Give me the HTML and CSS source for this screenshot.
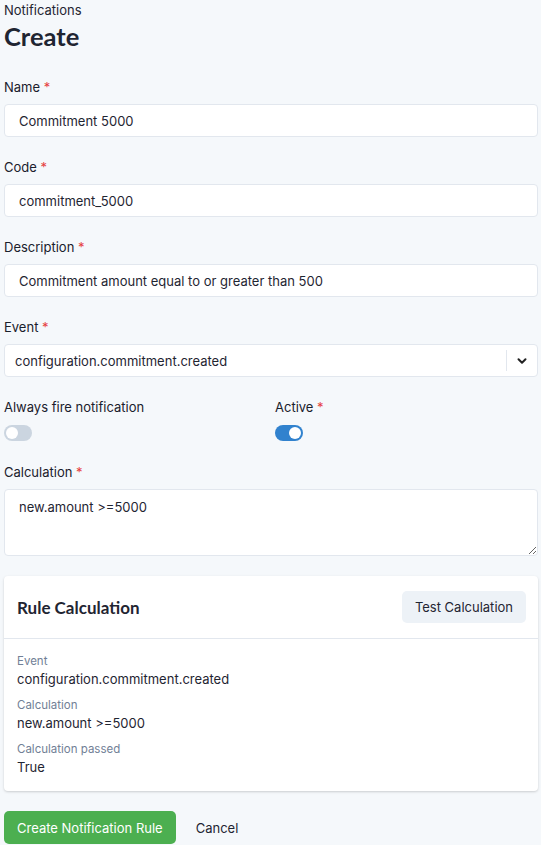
FILE: index.html
```html
<!DOCTYPE html>
<html lang="en">
<head>
    <meta charset="UTF-8">
    <meta name="viewport" content="width=device-width, initial-scale=1.0">
    <title>Create Notification</title>
    <link rel="stylesheet" href="styles.css">
</head>
<body>

<div class="page">
    <div class="breadcrumb">Notifications</div>
    <h1 class="page-title">Create</h1>

    <form class="rule-form">
        <div class="field">
            <label>Name <span class="req">*</span></label>
            <input type="text" class="text-input" value="Commitment 5000">
        </div>

        <div class="field">
            <label>Code <span class="req">*</span></label>
            <input type="text" class="text-input" value="commitment_5000">
        </div>

        <div class="field">
            <label>Description <span class="req">*</span></label>
            <input type="text" class="text-input" value="Commitment amount equal to or greater than 500">
        </div>

        <div class="field">
            <label>Event <span class="req">*</span></label>
            <div class="select">
                <span class="select-value">configuration.commitment.created</span>
                <span class="select-sep"></span>
                <span class="select-arrow">
                    <svg width="12" height="12" viewBox="0 0 12 12"><path d="M2.5 4.2 L6 7.7 L9.5 4.2" fill="none" stroke="#222" stroke-width="2" stroke-linecap="round" stroke-linejoin="round"/></svg>
                </span>
            </div>
        </div>

        <div class="field-row">
            <div class="field">
                <label>Always fire notification</label>
                <span class="toggle"><span class="knob"></span></span>
            </div>
            <div class="field">
                <label>Active <span class="req">*</span></label>
                <span class="toggle on"><span class="knob"></span></span>
            </div>
        </div>

        <div class="field">
            <label>Calculation <span class="req">*</span></label>
            <textarea class="text-area">new.amount &gt;=5000</textarea>
        </div>
    </form>

    <div class="card">
        <div class="card-header">
            <h2>Rule Calculation</h2>
            <button class="btn-light">Test Calculation</button>
        </div>
        <div class="card-body">
            <div class="result">
                <div class="result-label">Event</div>
                <div class="result-value">configuration.commitment.created</div>
            </div>
            <div class="result">
                <div class="result-label">Calculation</div>
                <div class="result-value">new.amount &gt;=5000</div>
            </div>
            <div class="result">
                <div class="result-label">Calculation passed</div>
                <div class="result-value">True</div>
            </div>
        </div>
    </div>

    <div class="actions">
        <button class="btn-primary">Create Notification Rule</button>
        <button class="btn-link">Cancel</button>
    </div>
</div>

</body>
</html>
```

FILE: styles.css
```css
body {
    margin: 0;
    background-color: #f5f8fb;
    font-family: Inter, "Noto Sans", sans-serif;
    color: #1f2532;
}
.page {
    padding: 3px 3px 0 4px;
}
.breadcrumb {
    font-size: 13px;
    line-height: 15px;
}
.page-title {
    font-family: Lato, sans-serif;
    font-size: 25.5px;
    font-weight: 700;
    line-height: 30px;
    margin: 3px 0 0;
}
.rule-form {
    margin-top: 27px;
}
.field {
    margin-bottom: 21px;
}
.field label {
    display: block;
    font-size: 13px;
    font-weight: 400;
    line-height: 18px;
    margin-bottom: 8px;
    color: #1a202c;
}
.req {
    color: #e53e3e;
}
.text-input {
    display: block;
    box-sizing: border-box;
    width: 100%;
    height: 33px;
    padding: 0 14px;
    border: 1px solid #e2e7ee;
    border-radius: 4px;
    background: #fff;
    font-family: inherit;
    font-size: 13px;
    color: #1f2532;
}
.select {
    display: flex;
    align-items: center;
    box-sizing: border-box;
    height: 33px;
    padding-left: 10px;
    border: 1px solid #e2e7ee;
    border-radius: 4px;
    background: #fff;
    font-size: 13px;
}
.select-value {
    flex: 1;
}
.select-sep {
    width: 1px;
    height: 21px;
    background: #e2e7ee;
}
.select-arrow {
    display: flex;
    justify-content: center;
    width: 30px;
}
.field-row {
    display: grid;
    grid-template-columns: 271px 1fr;
}
.field-row .field {
    margin-bottom: 22px;
}
.field-row .field label {
    margin-bottom: 9px;
}
.toggle {
    display: block;
    position: relative;
    width: 28px;
    height: 16px;
    border-radius: 8px;
    background: #cbd5e0;
}
.toggle .knob {
    position: absolute;
    top: 2px;
    left: 2px;
    width: 12px;
    height: 12px;
    border-radius: 50%;
    background: #fff;
}
.toggle.on {
    background: #3182ce;
}
.toggle.on .knob {
    left: 14px;
}
.text-area {
    display: block;
    box-sizing: border-box;
    width: 100%;
    height: 67px;
    padding: 9px 14px;
    border: 1px solid #e2e7ee;
    border-radius: 4px;
    background: #fff;
    font-family: inherit;
    font-size: 13px;
    color: #1f2532;
}
.rule-form .field:last-child {
    margin-bottom: 0;
}
.card {
    margin-top: 20px;
    background: #fff;
    border-radius: 4px;
    box-shadow: 0 1px 3px rgba(0, 0, 0, 0.12), 0 1px 2px rgba(0, 0, 0, 0.06);
}
.card-header {
    display: flex;
    justify-content: space-between;
    align-items: center;
    padding: 15px 12px 15px 13px;
    border-bottom: 1px solid #e2e7ee;
}
.card-header h2 {
    font-family: Lato, sans-serif;
    font-size: 17px;
    font-weight: 700;
    margin: 0;
}
.btn-light {
    height: 32px;
    padding: 0 13px;
    border: none;
    border-radius: 5px;
    background: #edf2f7;
    font-family: inherit;
    font-size: 13px;
    color: #1f2532;
}
.card-body {
    padding: 14px 13px 14px;
}
.result {
    margin-bottom: 8px;
}
.result:last-child {
    margin-bottom: 0;
}
.result-label {
    font-size: 11.5px;
    line-height: 16px;
    color: #718096;
}
.result-value {
    font-size: 13px;
    line-height: 20px;
}
.actions {
    display: flex;
    align-items: center;
    gap: 20px;
    margin-top: 20px;
}
.btn-primary {
    height: 33px;
    padding: 0 13px;
    border: none;
    border-radius: 5px;
    background: #4caf50;
    color: #fff;
    font-family: inherit;
    font-size: 13px;
}
.btn-link {
    padding: 0;
    border: none;
    background: none;
    font-family: inherit;
    font-size: 13px;
    color: #1f2532;
}
```
